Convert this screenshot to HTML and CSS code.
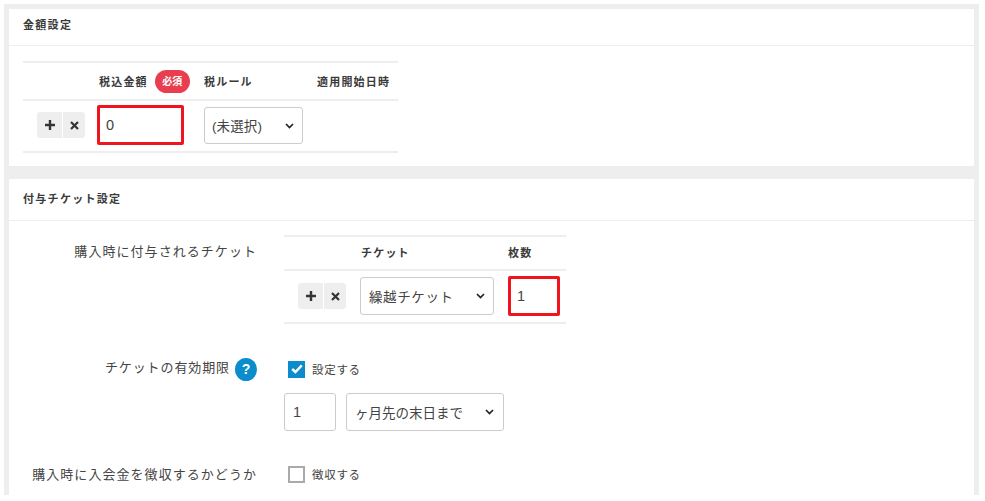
FILE: index.html
```html
<!DOCTYPE html>
<html lang="ja">
<head>
<meta charset="utf-8">
<title>金額設定</title>
<link rel="stylesheet" href="styles.css">
</head>
<body>
<div class="page">
  <section class="panel panel-price">
    <h2 class="panel-title">金額設定</h2>
    <div class="panel-body">
      <div class="tbl price-tbl">
        <div class="tbl-head">
          <span class="th th-amount">税込金額<span class="badge">必須</span></span>
          <span class="th th-rule">税ルール</span>
          <span class="th th-date">適用開始日時</span>
        </div>
        <div class="tbl-row">
          <div class="btns">
            <span class="btn"><svg width="12" height="12" viewBox="0 0 12 12"><path d="M6 1v10M1 6h10" stroke="#333" stroke-width="2.4" fill="none"/></svg></span>
            <span class="btn btn-x"><svg width="9" height="9" viewBox="0 0 9 9"><path d="M1 1l7 7M8 1l-7 7" stroke="#333" stroke-width="2.2" fill="none"/></svg></span>
          </div>
          <div class="field field-error amount">0</div>
          <div class="field select rule">(未選択)<svg class="chev" width="9" height="6" viewBox="0 0 9 6"><path d="M1 1l3.5 3.5L8 1" stroke="#222" stroke-width="1.7" fill="none"/></svg></div>
        </div>
      </div>
    </div>
  </section>

  <section class="panel panel-ticket">
    <h2 class="panel-title">付与チケット設定</h2>
    <div class="panel-form">
      <div class="form-row row-grant">
        <div class="form-label">購入時に付与されるチケット</div>
        <div class="tbl ticket-tbl">
          <div class="tbl-head head-ticket">
            <span class="th th-ticket">チケット</span>
            <span class="th th-count">枚数</span>
          </div>
          <div class="tbl-row row-ticket">
            <div class="btns">
              <span class="btn"><svg width="12" height="12" viewBox="0 0 12 12"><path d="M6 1v10M1 6h10" stroke="#333" stroke-width="2.4" fill="none"/></svg></span>
              <span class="btn btn-x"><svg width="9" height="9" viewBox="0 0 9 9"><path d="M1 1l7 7M8 1l-7 7" stroke="#333" stroke-width="2.2" fill="none"/></svg></span>
            </div>
            <div class="field select ticket">繰越チケット<svg class="chev" width="9" height="6" viewBox="0 0 9 6"><path d="M1 1l3.5 3.5L8 1" stroke="#222" stroke-width="1.7" fill="none"/></svg></div>
            <div class="field field-error count">1</div>
          </div>
        </div>
      </div>

      <div class="form-row row-expiry">
        <div class="form-label">チケットの有効期限<span class="help">?</span></div>
        <div class="form-control">
          <label class="check"><span class="box box-on"><svg width="12" height="10" viewBox="0 0 12 10"><path d="M1.2 5l3.2 3L10.8 1.4" stroke="#fff" stroke-width="2.4" fill="none"/></svg></span>設定する</label>
          <div class="expiry-inputs">
            <div class="field months">1</div>
            <div class="field select until">ヶ月先の末日まで<svg class="chev" width="9" height="6" viewBox="0 0 9 6"><path d="M1 1l3.5 3.5L8 1" stroke="#222" stroke-width="1.7" fill="none"/></svg></div>
          </div>
        </div>
      </div>

      <div class="form-row row-fee">
        <div class="form-label">購入時に入会金を徴収するかどうか</div>
        <div class="form-control">
          <label class="check"><span class="box"></span>徴収する</label>
        </div>
      </div>
    </div>
  </section>
</div>
</body>
</html>
```

FILE: styles.css
```css
* { box-sizing: border-box; }
html, body { margin: 0; height: 501px; overflow: hidden; background: #fff; }
body {
  font-family: "Liberation Sans", "Noto Sans CJK JP", sans-serif;
  color: #333;
}
.page {
  margin: 4px 6px 0 4px;
  height: 491px;
  padding: 5px 5px 0;
  background: #eee;
  overflow: hidden;
}
.panel { background: #fff; }
.panel-price { height: 157px; margin-bottom: 13px; }
.panel-ticket { height: 320px; }
.panel-title {
  margin: 0;
  height: 37px;
  padding-left: 14px;
  border-bottom: 1px solid #eee;
  font-size: 11px;
  font-weight: 700;
  letter-spacing: 1.3px;
  line-height: 32px;
  color: #3a3a3a;
}
.panel-ticket .panel-title { height: 42px; line-height: 40px; }
.panel-body { padding: 15px 0 0 14px; }

.tbl { border-top: 2px solid #eee; }
.price-tbl { width: 375px; }
.tbl-head {
  display: flex;
  height: 38px;
  align-items: center;
  border-bottom: 2px solid #eee;
}
.th { font-size: 11px; font-weight: 700; letter-spacing: 1.2px; color: #3a3a3a; white-space: nowrap; }
.th-amount { margin-left: 76px; display: flex; align-items: center; width: 105px; }
.th-rule { width: 113px; }
.badge {
  margin-left: 7px;
  width: 35px;
  height: 23px;
  border-radius: 12px;
  background: #e83e50;
  color: #fff;
  font-size: 10px;
  font-weight: 700;
  letter-spacing: 0;
  line-height: 23px;
  text-align: center;
}
.tbl-row {
  display: flex;
  align-items: center;
  height: 52px;
  padding-bottom: 2px;
  border-bottom: 2px solid #eee;
}
.btns { display: flex; gap: 1px; margin-left: 14px; }
.btn {
  display: flex;
  align-items: center;
  justify-content: center;
  width: 25px;
  height: 26px;
  background: #eee;
  border-radius: 3px 0 0 3px;
}
.btn-x { width: 22px; border-radius: 0 3px 3px 0; }
.field {
  display: flex;
  align-items: center;
  height: 38px;
  padding-bottom: 1px;
  padding-left: 8px;
  border: 1px solid #ccc;
  border-radius: 3px;
  background: #fff;
  font-size: 13.5px;
  color: #444;
  white-space: nowrap;
}
.select { position: relative; letter-spacing: 0.6px; }
.chev { position: absolute; right: 8px; top: 15px; }
.field-error { border: 3px solid #f0141e; border-radius: 2px; padding-left: 6px; }
.amount { width: 87px; height: 40px; margin-left: 12px; font-size: 14.5px; }
.rule { width: 99px; margin-left: 20px; height: 37px; padding-left: 7px; letter-spacing: 0.1px; }

.panel-form { padding-top: 14px; }
.form-row { display: flex; }
.form-label {
  width: 248px;
  flex: none;
  text-align: right;
  font-size: 13px;
  letter-spacing: 1.05px;
  color: #444;
  white-space: nowrap;
}
.row-grant .form-label { line-height: 34px; }
.ticket-tbl { width: 282px; margin-left: 27px; }
.head-ticket { height: 34px; padding-bottom: 2px; }
.th-ticket { margin-left: 77px; width: 147px; }
.row-ticket { height: 53px; padding-bottom: 1px; }
.ticket { width: 134px; margin-left: 14px; }
.count { width: 52px; margin-left: 14px; height: 40px; padding-left: 6px; font-size: 14.5px; }
.row-expiry { margin-top: 36px; height: 108px; }
.row-expiry .form-label {
  display: flex;
  align-items: flex-start;
  justify-content: flex-end;
  line-height: 20px;
  margin-top: -2px;
  letter-spacing: 0.9px;
}
.help {
  margin-left: 5px;
  width: 22px;
  height: 23px;
  border-radius: 50%;
  background: #0b8ccc;
  color: #fff;
  font-size: 14px;
  font-weight: 700;
  letter-spacing: 0;
  line-height: 23px;
  text-align: center;
}
.form-control { margin-left: 27px; }
.check {
  display: flex;
  align-items: center;
  height: 18px;
  margin-left: 4px;
  font-size: 11.5px;
  letter-spacing: 0.7px;
  color: #444;
}
.box {
  display: flex;
  align-items: center;
  justify-content: center;
  width: 17px;
  height: 17px;
  margin-right: 7px;
  border: 2px solid #aaa;
  background: #fff;
}
.box-on { border: 0; background: #0b8ccc; }
.expiry-inputs { display: flex; gap: 10px; margin-top: 15px; }
.months { width: 52px; height: 38px; font-size: 14.5px; }
.until { width: 158px; height: 38px; padding-left: 8px; letter-spacing: 0; }
.until .chev { right: 9px; }
.row-fee { margin-top: -3px; }
.row-fee .form-label { line-height: 20px; }
```
